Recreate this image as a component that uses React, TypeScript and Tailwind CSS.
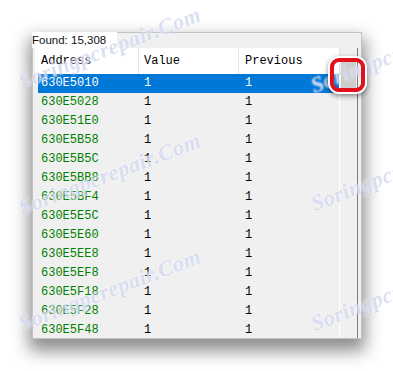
import React from 'react';

const addresses = [
  '630E5010',
  '630E5028',
  '630E51E0',
  '630E5B58',
  '630E5B5C',
  '630E5BB8',
  '630E5BF4',
  '630E5E5C',
  '630E5E60',
  '630E5EE8',
  '630E5EF8',
  '630E5F18',
  '630E5F28',
  '630E5F48',
];

// watermark spots, bottom-left of the text sits at the start of the diagonal
const marks = [
  'left-[24px] top-[70px]',
  'left-[24px] top-[196px]',
  'left-[24px] top-[312px]',
  'left-[316px] top-[74px]',
  'left-[316px] top-[192px]',
  'left-[316px] top-[312px]',
];

const Watermark = ({ pos }: { pos: string }) => (
  <span
    className={`pointer-events-none absolute ${pos} origin-bottom-left -rotate-[21deg] whitespace-nowrap font-['Liberation_Serif'] text-[22px] font-bold italic leading-[24px] tracking-[0.5px] text-[rgba(160,172,225,0.38)] [text-shadow:0_0_2px_rgba(255,255,255,0.9)]`}
  >
    Soringpcrepair.Com
  </span>
);

const App = () => {
  return (
    <div className="relative h-[371px] w-[393px] overflow-hidden bg-white">
      <div className="pl-[32px] pt-[32px]">
        <div className="flex h-[307px] w-[330px] flex-col shadow-[0_9px_16px_3px_rgba(0,0,0,0.45)]">
          <div className="flex h-[16px]">
            <div className="w-[85px] bg-white font-['Liberation_Sans'] text-[11.5px] leading-[17px] text-[#111]">
              Found: 15,308
            </div>
            <div className="flex-1 border-r border-t border-[#c2c2c2] bg-[#f0f0f0]" />
          </div>
          <div className="flex min-h-0 flex-1 border-b border-l border-r border-[#c2c2c2] bg-[#f0f0f0] pl-[2px] pr-[3px]">
            <div className="flex min-w-0 flex-1 overflow-hidden border-r border-[#7c7c7c]">
              <div className="flex w-[305px] flex-col">
                <div className="flex h-[26px] bg-white font-['Liberation_Mono'] text-[12px] leading-[26px] text-black">
                  <div className="w-[104px] border-r border-[#e5e5e5] pl-[6px]">Address</div>
                  <div className="w-[100px] border-r border-[#e5e5e5] pl-[5px]">Value</div>
                  <div className="w-[101px] border-r border-[#e5e5e5] pl-[6px]">Previous</div>
                </div>
                <div className="flex-1 border-r border-white pl-[3px] font-['Liberation_Mono'] text-[12px] leading-[19px]">
                  {addresses.map((a, i) => (
                    <div
                      key={a}
                      className={
                        i === 0
                          ? 'flex h-[19px] bg-[#0078d7] text-white'
                          : 'flex h-[19px] text-black'
                      }
                    >
                      <div className={i === 0 ? 'w-[103px] pl-[3px]' : 'w-[103px] pl-[3px] text-[#008000]'}>{a}</div>
                      <div className="w-[100px] pl-[3px]">1</div>
                      <div className="flex-1 pl-[4px]">1</div>
                    </div>
                  ))}
                </div>
              </div>
              <div className="w-[17px] bg-[#f0f0f0] pt-[14px]">
                <div className="mx-[1px] h-[26px] bg-[#cdcdcd]" />
              </div>
            </div>
          </div>
        </div>
      </div>

      {marks.map((m) => (
        <Watermark key={m} pos={m} />
      ))}

      <div className="pointer-events-none absolute left-[330px] top-[58px] h-[34px] w-[35px] rounded-[9px] border-[4px] border-[#e3101c] shadow-[0_0_0_2px_#fff,0_2px_5px_2px_rgba(0,0,0,0.45)]" />
    </div>
  );
};

export default App;
